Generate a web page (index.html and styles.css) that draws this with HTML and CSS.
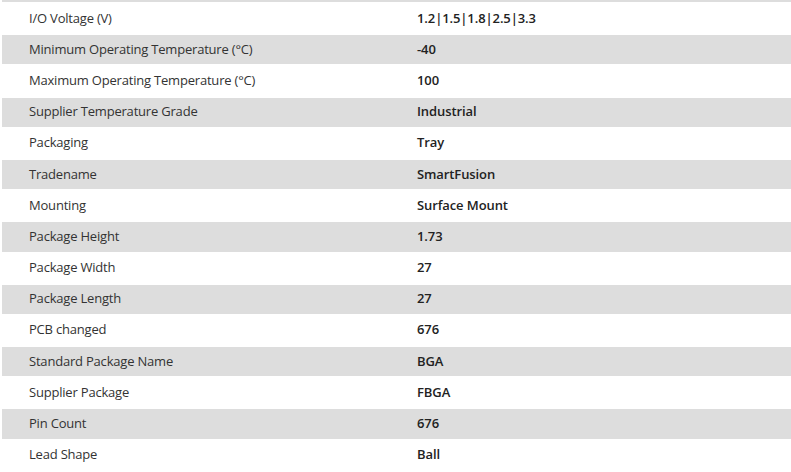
FILE: index.html
```html
<!DOCTYPE html>
<html>
<head>
<meta charset="utf-8">
<link rel="stylesheet" href="styles.css">
</head>
<body>
<div class="spec">
  <div class="prev"></div>
  <div class="row"><div class="k">I/O Voltage (V)</div><div class="v">1.2|1.5|1.8|2.5|3.3</div></div>
  <div class="row alt"><div class="k">Minimum Operating Temperature (°C)</div><div class="v">-40</div></div>
  <div class="row"><div class="k">Maximum Operating Temperature (°C)</div><div class="v">100</div></div>
  <div class="row alt"><div class="k">Supplier Temperature Grade</div><div class="v">Industrial</div></div>
  <div class="row"><div class="k">Packaging</div><div class="v">Tray</div></div>
  <div class="row alt"><div class="k">Tradename</div><div class="v">SmartFusion</div></div>
  <div class="row"><div class="k">Mounting</div><div class="v">Surface Mount</div></div>
  <div class="row alt"><div class="k">Package Height</div><div class="v">1.73</div></div>
  <div class="row"><div class="k">Package Width</div><div class="v">27</div></div>
  <div class="row alt"><div class="k">Package Length</div><div class="v">27</div></div>
  <div class="row"><div class="k">PCB changed</div><div class="v">676</div></div>
  <div class="row alt"><div class="k">Standard Package Name</div><div class="v">BGA</div></div>
  <div class="row"><div class="k">Supplier Package</div><div class="v">FBGA</div></div>
  <div class="row alt"><div class="k">Pin Count</div><div class="v">676</div></div>
  <div class="row"><div class="k">Lead Shape</div><div class="v">Ball</div></div>
</div>
</body>
</html>
```
FILE: styles.css
```css
html, body {
  margin: 0;
  padding: 0;
  background: #fff;
}
body {
  font-family: "Open Sans", "Noto Sans", sans-serif;
  font-size: 13px;
  color: #333;
  overflow: hidden;
}
.spec {
  display: flex;
  flex-direction: column;
  margin-left: 2px;
}
.prev {
  height: 2px;
  margin-bottom: 1px;
  background: #dddddd;
}
.row {
  display: grid;
  grid-template-columns: 388px 1fr;
  align-items: center;
  height: 31.2px;
  box-sizing: border-box;
  border-top: 1px solid #fff;
  border-bottom: 1px solid #fff;
  padding-bottom: 2px;
}
.row.alt {
  background: #dddddd;
}
.k {
  padding-left: 27px;
  letter-spacing: -0.2px;
}
.v {
  padding-left: 27px;
  font-weight: 600;
  color: #222;
  letter-spacing: -0.1px;
}
```
